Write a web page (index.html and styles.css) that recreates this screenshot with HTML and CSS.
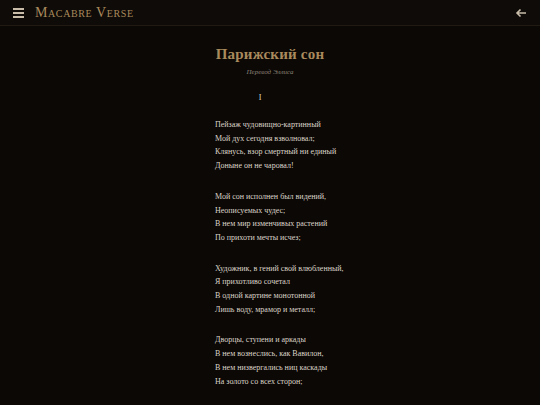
FILE: index.html
```html
<!DOCTYPE html>
<html lang="ru">
<head>
<meta charset="utf-8">
<link rel="stylesheet" href="styles.css">
</head>
<body>
<header class="topbar">
  <div class="brand">
    <svg class="menu" width="12" height="10" viewBox="0 0 12 10"><rect x="0" y="0" width="11" height="2" fill="#c9bda9"/><rect x="0" y="4" width="11" height="2" fill="#c9bda9"/><rect x="0" y="8" width="11" height="2" fill="#c9bda9"/></svg>
    <span class="logo">Macabre Verse</span>
  </div>
  <svg class="back" width="12" height="10" viewBox="0 0 12 10"><path d="M11 5H2M5.5 1.5L2 5l3.5 3.5" fill="none" stroke="#c9bda9" stroke-width="1.6"/></svg>
</header>
<main class="poem">
  <h1 class="title">Парижский сон</h1>
  <p class="translator">Перевод Эллиса</p>
  <div class="body">
    <p class="part">I</p>
    <p class="stanza">Пейзаж чудовищно-картинный<br>Мой дух сегодня взволновал;<br>Клянусь, взор смертный ни единый<br>Доныне он не чаровал!</p>
    <p class="stanza">Мой сон исполнен был видений,<br>Неописуемых чудес;<br>В нем мир изменчивых растений<br>По прихоти мечты исчез;</p>
    <p class="stanza">Художник, в гений свой влюбленный,<br>Я прихотливо сочетал<br>В одной картине монотонной<br>Лишь воду, мрамор и металл;</p>
    <p class="stanza">Дворцы, ступени и аркады<br>В нем вознеслись, как Вавилон,<br>В нем низвергались ниц каскады<br>На золото со всех сторон;</p>
  </div>
</main>
</body>
</html>
```
FILE: styles.css
```css
html, body {
  margin: 0;
  background: #0b0806;
}
body {
  font-family: "Liberation Serif", "Times New Roman", serif;
  color: #dcd4c8;
}
.topbar {
  height: 26px;
  box-sizing: border-box;
  border-bottom: 1px solid #211a12;
  background: #0f0b08;
  display: flex;
  align-items: center;
  justify-content: space-between;
  padding: 0 13px 0 13px;
}
.brand {
  display: flex;
  align-items: center;
  gap: 10px;
}
.menu { display: block; }
.logo {
  font-variant: small-caps;
  font-size: 14px;
  letter-spacing: 0.6px;
  color: #a98a5c;
}
.back { display: block; }
.poem {
  padding-top: 17px;
}
.title {
  margin: 0;
  text-align: center;
  font-size: 15px;
  font-weight: bold;
  color: #a98a5c;
  line-height: 22px;
  letter-spacing: 0.2px;
}
.translator {
  margin: 3px 0 0;
  text-align: center;
  font-style: italic;
  font-size: 7px;
  color: #8c8174;
}
.body {
  padding-left: 215px;
}
.part {
  margin: 17px 0 0;
  width: 90px;
  text-align: center;
  font-size: 8px;
}
.stanza {
  margin: 16px 0 0;
  font-size: 8px;
  line-height: 13.7px;
}
.stanza + .stanza {
  margin-top: 17px;
}
```
